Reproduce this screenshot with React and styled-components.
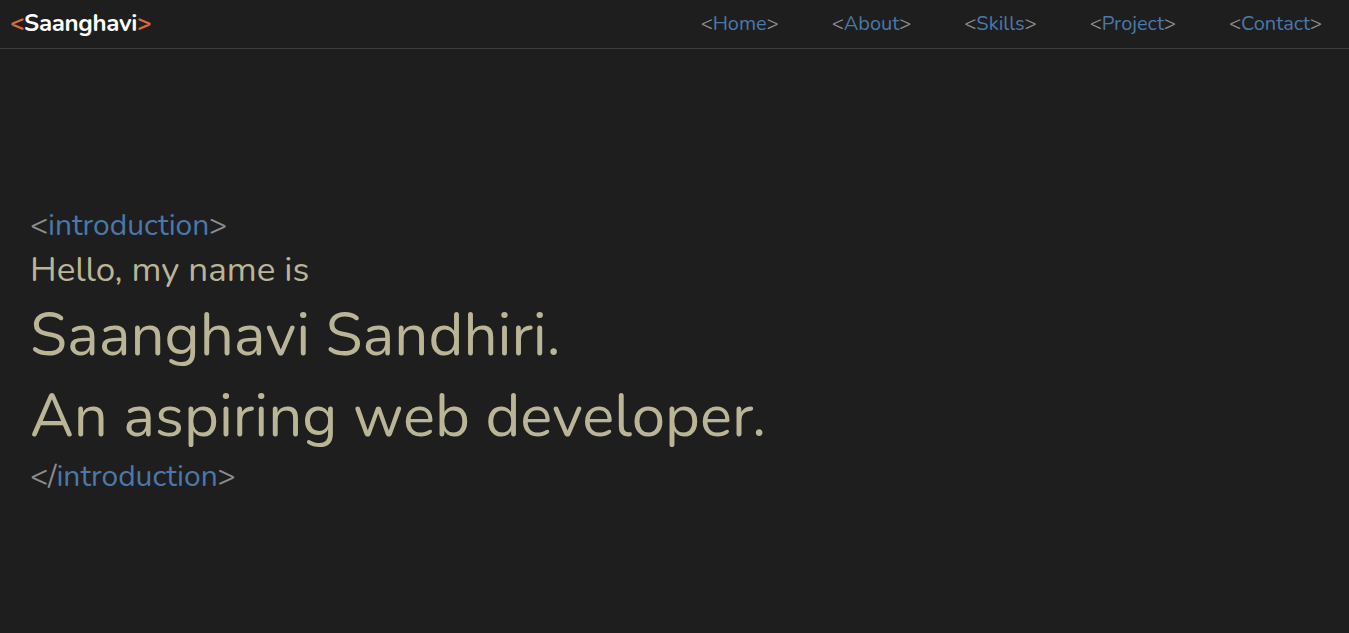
import React from "react";
import styled, { createGlobalStyle } from "styled-components";

const Global = createGlobalStyle`
  html, body { margin: 0; padding: 0; background: #1e1e1e; }
  body { font-family: "Nunito", "Lato", "Noto Sans", sans-serif; }
  * { box-sizing: border-box; }
`;

const Page = styled.div`
  min-height: 633px;
  display: flex;
  flex-direction: column;
  background: #1e1e1e;
`;

const Header = styled.header`
  height: 49px;
  display: flex;
  align-items: center;
  justify-content: space-between;
  padding: 0 27px 2px 10px;
  border-bottom: 1px solid #3c3c3c;
`;

const Logo = styled.div`
  font-size: 24px;
  font-weight: 700;
  color: #ffffff;
  letter-spacing: -0.3px;
`;

const Bracket = styled.span`
  color: ${(p) => p.$color || "#8c8c8c"};
`;

const Nav = styled.nav`
  display: flex;
  gap: 53px;
`;

const NavLink = styled.a`
  font-size: 20px;
  color: #4a78aa;
  text-decoration: none;
  cursor: pointer;
`;

const Hero = styled.main`
  flex: 1;
  display: flex;
  flex-direction: column;
  justify-content: center;
  padding: 20px 30px 0;
`;

const Tag = styled.div`
  font-size: 30px;
  color: #4a78aa;
  line-height: ${(p) => p.$lh || "40px"};
`;

const Hello = styled.div`
  font-size: 35px;
  color: #bab597;
  line-height: 50px;
`;

const Big = styled.h1`
  margin: 0;
  font-size: 60px;
  font-weight: 400;
  color: #bab597;
  line-height: 81px;
`;

const items = ["Home", "About", "Skills", "Project", "Contact"];

export default function App() {
  return (
    <Page>
      <Global />
      <Header>
        <Logo>
          <Bracket $color="#d8693a">&lt;</Bracket>Saanghavi<Bracket $color="#d8693a">&gt;</Bracket>
        </Logo>
        <Nav>
          {items.map((it) => (
            <NavLink key={it}>
              <Bracket>&lt;</Bracket>
              {it}
              <Bracket>&gt;</Bracket>
            </NavLink>
          ))}
        </Nav>
      </Header>
      <Hero>
        <Tag $lh="39px">
          <Bracket>&lt;</Bracket>introduction<Bracket>&gt;</Bracket>
        </Tag>
        <Hello>Hello, my name is</Hello>
        <Big>Saanghavi Sandhiri.</Big>
        <Big>An aspiring web developer.</Big>
        <Tag $lh="40px">
          <Bracket>&lt;/</Bracket>introduction<Bracket>&gt;</Bracket>
        </Tag>
      </Hero>
    </Page>
  );
}
